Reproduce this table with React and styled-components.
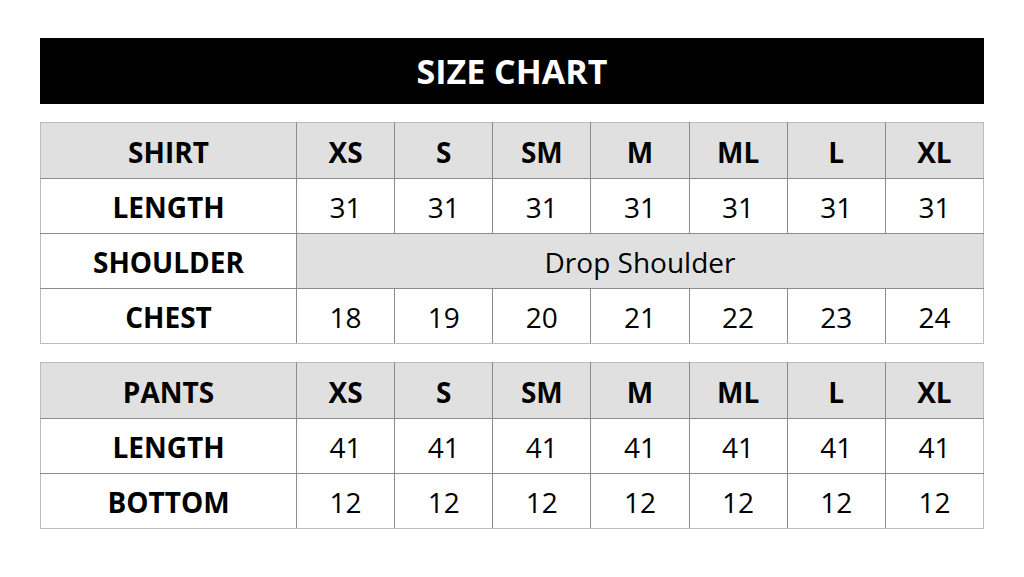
import styled, { createGlobalStyle } from "styled-components";

const GlobalStyle = createGlobalStyle`
  body {
    margin: 0;
    background: #ffffff;
    font-family: "Open Sans", "Noto Sans", sans-serif;
    color: #000;
  }
`;

const Page = styled.div`
  width: 944px;
  margin: 0 auto;
  padding-top: 38px;
  display: flex;
  flex-direction: column;
`;

const Title = styled.h1`
  margin: 0 0 18px;
  height: 66px;
  background: #000;
  color: #fff;
  display: flex;
  align-items: center;
  justify-content: center;
  font-size: 34px;
  font-weight: 700;
`;

const Table = styled.table`
  width: 944px;
  border-collapse: collapse;
  table-layout: fixed;
  margin-bottom: ${(p) => p.$gap || 0}px;

  tr:first-child td { border-top-color: #bcbcbc; height: 53px; }
  tr:last-child td { border-bottom-color: #bcbcbc; }
  td:first-child { border-left-color: #bcbcbc; }
  td:last-child { border-right-color: #bcbcbc; }
`;

const Cell = styled.td`
  height: 52px;
  padding: 2px 0 0;
  border: 1px solid #8c8c8c;
  text-align: center;
  vertical-align: middle;
  font-size: 28px;
  font-weight: ${(p) => (p.$bold ? 700 : 400)};
  background: ${(p) => (p.$shade ? "#e0e0e0" : "#fff")};
  line-height: 1;
`;

const sizes = ["XS", "S", "SM", "M", "ML", "L", "XL"];

const HeaderRow = ({ label }) => (
  <tr>
    <Cell $bold $shade>{label}</Cell>
    {sizes.map((s) => (
      <Cell key={s} $bold $shade>{s}</Cell>
    ))}
  </tr>
);

const DataRow = ({ label, values }) => (
  <tr>
    <Cell $bold>{label}</Cell>
    {values.map((v, i) => (
      <Cell key={i}>{v}</Cell>
    ))}
  </tr>
);

const Cols = () => (
  <colgroup>
    <col style={{ width: 256 }} />
    {sizes.map((s) => (
      <col key={s} />
    ))}
  </colgroup>
);

export default function App() {
  return (
    <>
      <GlobalStyle />
      <Page>
        <Title>SIZE CHART</Title>
        <Table $gap={18}>
          <Cols />
          <tbody>
            <HeaderRow label="SHIRT" />
            <DataRow label="LENGTH" values={[31, 31, 31, 31, 31, 31, 31]} />
            <tr>
              <Cell $bold>SHOULDER</Cell>
              <Cell colSpan={7} $shade>Drop Shoulder</Cell>
            </tr>
            <DataRow label="CHEST" values={[18, 19, 20, 21, 22, 23, 24]} />
          </tbody>
        </Table>
        <Table>
          <Cols />
          <tbody>
            <HeaderRow label="PANTS" />
            <DataRow label="LENGTH" values={[41, 41, 41, 41, 41, 41, 41]} />
            <DataRow label="BOTTOM" values={[12, 12, 12, 12, 12, 12, 12]} />
          </tbody>
        </Table>
      </Page>
    </>
  );
}
